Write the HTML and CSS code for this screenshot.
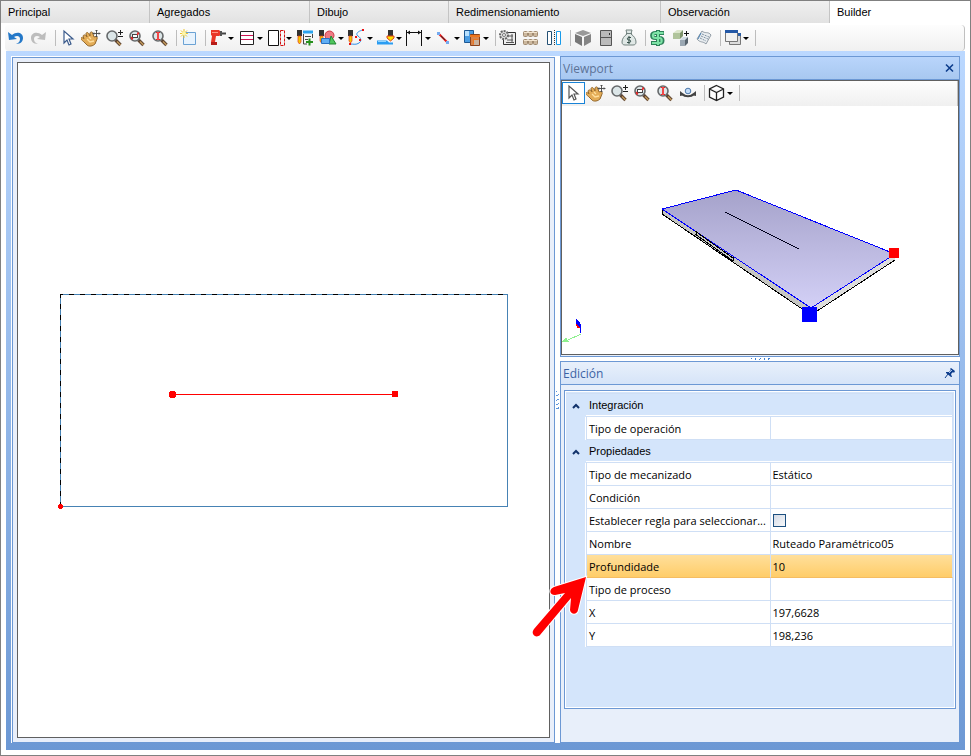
FILE: index.html
```html
<!DOCTYPE html>
<html lang="es">
<head>
    <meta charset="UTF-8">
    <meta name="viewport" content="width=device-width, initial-scale=1.0">
    <title>Builder</title>
    <link rel="stylesheet" href="styles.css">
</head>
<body>
    <!-- icons used by both toolbars -->
    <svg class="defs" width="0" height="0" aria-hidden="true">
        <symbol id="i-cursor" viewBox="0 0 20 20">
            <path d="M6 3v12l3-3 2 5 2-1-2-5h4z" fill="#fff" stroke="currentColor" stroke-width="1.2"/>
        </symbol>
        <symbol id="i-hand" viewBox="0 0 20 20">
            <path d="M2 8c1-2 3-1 4 1L5 6c0-2 2-2 3 0l1 2 0-3c1-2 3-1 3 1l1 3c2-1 4 0 3 2l-2 5c-2 2-6 3-8 1l-3-3c-2-2-4-3-3-4 1-1 2 0 3 1z" fill="#e3ac57" stroke="#94682c"/>
            <path d="M6 11l3 3 4-1M8 9l2 2" fill="none" stroke="#ffdf9f" stroke-width="1.300"/>
            <path d="M15.500 2v7M12 5.500h7M14.500 3l1-1 1 1M14.500 8l1 1 1-1M13 4.500l-1 1 1 1M18 4.500l1 1-1 1" fill="none" stroke="#444" stroke-width=".9"/>
        </symbol>
        <symbol id="i-lens" viewBox="0 0 20 20">
            <path d="M11.500 12l5 5" stroke="#5c4330" stroke-width="3.400"/>
            <path d="M13 13.500l3.500 3.500" stroke="#c49a5a" stroke-width="1.400"/>
            <circle cx="8" cy="8" r="5" fill="#dce6e8" stroke="#66696b" stroke-width="1.600"/>
        </symbol>
        <symbol id="i-zoom" viewBox="0 0 20 20">
            <use href="#i-lens"/>
            <path d="M14 4.500h5M16.500 2v5M14 8.500h5" stroke="#222"/>
        </symbol>
        <symbol id="i-zoomwin" viewBox="0 0 20 20">
            <use href="#i-lens"/>
            <rect x="5.500" y="6.500" width="5" height="3" fill="#fff" stroke="#444"/>
            <path d="M4 9l2 2M10 7l2-2M4 11h2M10 5h2" stroke="#e22" stroke-width="1.200"/>
        </symbol>
        <symbol id="i-zoomfit" viewBox="0 0 20 20">
            <use href="#i-lens"/>
            <path d="M6 4.500h4M6 11.500h4" stroke="#e22"/>
            <path d="M8 4v8" stroke="#f04848" stroke-width="2"/>
        </symbol>
    </svg>

    <div class="app">
        <nav class="tabs">
            <a class="tab" href="#">Principal</a>
            <a class="tab" href="#">Agregados</a>
            <a class="tab" href="#">Dibujo</a>
            <a class="tab" href="#">Redimensionamiento</a>
            <a class="tab" href="#">Observación</a>
            <a class="tab active" href="#" aria-current="page">Builder</a>
        </nav>

        <div class="toolbar main-toolbar">
            <button class="tool" aria-label="Deshacer">
                <svg viewBox="0 0 20 20"><path d="M2 4l1 8 8-1-3-2c3-2 6-1 6 2 0 2-1 4-4 5 5 0 7-3 7-6 0-5-6-7-11-3z" fill="#2478c8"/></svg>
            </button>
            <button class="tool" aria-label="Rehacer">
                <svg viewBox="0 0 20 20"><path d="M17 4l-1 8-8-1 3-2C8 7 5 8 5 11c0 2 1 4 4 5-5 0-7-3-7-6 0-5 6-7 11-3z" fill="#bdbdbd"/></svg>
            </button>
            <span class="sep"></span>
            <button class="tool cursor" aria-label="Seleccionar"><svg><use href="#i-cursor"/></svg></button>
            <button class="tool" aria-label="Mover vista"><svg><use href="#i-hand"/></svg></button>
            <button class="tool" aria-label="Zoom"><svg><use href="#i-zoom"/></svg></button>
            <button class="tool" aria-label="Zoom ventana"><svg><use href="#i-zoomwin"/></svg></button>
            <button class="tool" aria-label="Zoom extensión"><svg><use href="#i-zoomfit"/></svg></button>
            <span class="sep"></span>
            <button class="tool" aria-label="Nuevo">
                <svg viewBox="0 0 20 20"><path d="M4.500 4.500h12v12h-12z" fill="#e8f3fd" stroke="#6ba2d4"/><path d="M5 1v9M1 5.500h8M2 2.500l6 6M8 2.500l-6 6" stroke="#ecc52f"/><circle cx="5" cy="5.500" r="2" fill="#fff6a6"/></svg>
            </button>
            <span class="sep"></span>
            <button class="tool drop" aria-label="Taladro">
                <svg viewBox="0 0 20 20"><path d="M3 2h8l2 2v3l-2 1H8l-1 6h2v3H3v-3l1-6-1-1z" fill="#e93528"/><path d="M3 14h6v3H3z" fill="#b61c18"/><path d="M4 4.500h6" stroke="#ff9485"/><path d="M12 3h2v5h-2z" fill="#555"/><path d="M14 5.500h4" stroke="#444" stroke-width="2"/></svg>
            </button>
            <button class="tool drop" aria-label="Ranura">
                <svg viewBox="0 0 20 20"><path d="M3.500 3.500h13v13h-13z" fill="#fff" stroke="#222"/><path d="M4 7.500h12M4 11.500h12" stroke="#cf1353"/></svg>
            </button>
            <button class="tool drop" aria-label="Borde">
                <svg viewBox="0 0 20 20"><path d="M2.500 2.500h10v15h-10z" fill="#fff" stroke="#111"/><path d="M14.500 2.500h4v15h-4z" fill="none" stroke="#d31111" stroke-dasharray="3 1"/></svg>
            </button>
            <button class="tool" aria-label="Lista de herramientas">
                <svg viewBox="0 0 20 20"><path d="M2 2h5v6H2z" fill="#333"/><path d="M3 8h3v6l-1.500 2L3 14z" fill="#f5c800" stroke="#e13b1c" stroke-width=".7"/><path d="M8 2.500h10v3H8z" fill="#2da4ee"/><path d="M8.500 6v10H12M10 8.500h6M10 11.500h3M17.500 6v4" fill="none" stroke="#444"/><path d="M14.500 10.500v7M11 14h7" stroke="#26901c" stroke-width="2"/></svg>
            </button>
            <button class="tool drop" aria-label="Formas">
                <svg viewBox="0 0 20 20"><path d="M1 2h5v6H1z" fill="#333"/><path d="M2 8h3v5l-1.500 2L2 13z" fill="#f6c900" stroke="#e13b1c" stroke-width=".7"/><circle cx="11.500" cy="7.500" r="4.500" fill="#ee7a83" stroke="#cb3844"/><path d="M13 8l5 8h-7z" fill="#4fc65d" stroke="#218531"/><path d="M3.500 10.500h8v5h-8z" fill="#5faef4" stroke="#2870c1"/></svg>
            </button>
            <button class="tool drop" aria-label="Curva">
                <svg viewBox="0 0 20 20"><path d="M1 2h5v6H1z" fill="#333"/><path d="M2 8h3v5l-1.500 2L2 13z" fill="#f6c900" stroke="#e13b1c" stroke-width=".7"/><path d="M16 2c-5 1-8 4-5 6s4 5 1 7-5 1-9 1" fill="none" stroke="#2b8fe6"/><path d="M15 1h2v2h-2zM8 8h2v2H8zM12 11h2v2h-2zM2 15h2v2H2z" fill="#e11"/></svg>
            </button>
            <button class="tool drop" aria-label="Vaciado">
                <svg viewBox="0 0 20 20"><path d="M12 2h5v6h-5z" fill="#333"/><path d="M11 8h7v2l-3.500 3L11 10z" fill="#fbe000" stroke="#e13b1c"/><path d="M1 12.500h10l2 2h4v2H1z" fill="#2b9df2"/><path d="M2 13.500h8" stroke="#91d4ff"/></svg>
            </button>
            <button class="tool drop" aria-label="Cota">
                <svg viewBox="0 0 20 20"><path d="M1.500 2v16M16.500 2v16M2 4.500h14" stroke="#111"/><path d="M2 4.500l3-2v4zM16 4.500l-3-2v4z" fill="#111"/></svg>
            </button>
            <button class="tool drop" aria-label="Línea">
                <svg viewBox="0 0 20 20"><path d="M4 5l10 10" stroke="#e11a1a" stroke-width="2"/><path d="M7 8l4 4" stroke="#333"/><path d="M3 4h3v3H3zM12 13h3v3h-3z" fill="#74aaf0"/></svg>
            </button>
            <button class="tool drop" aria-label="Copiar">
                <svg viewBox="0 0 20 20"><path d="M1.500 2.500h9v12h-9z" fill="#4b9de3" stroke="#1d5893"/><path d="M2 3h4v5H2z" fill="#b8e1ff"/><path d="M7.500 6.500h9v11h-9z" fill="#d7834a" stroke="#8d431b"/><path d="M7 7h10v2H7zM10 11h5v5h-5z" fill="#ed761f"/><path d="M11 12h5v5h-5z" fill="#c9b3a0"/></svg>
            </button>
            <span class="sep"></span>
            <button class="tool" aria-label="Procesar">
                <svg viewBox="0 0 20 20"><path d="M6 4.500h11.500v12h-12V10" fill="#eee" stroke="#333"/><path d="M8 8h7M9 12h6M8 14.500h8M14 6v8" stroke="#555"/><circle cx="6" cy="7" r="4" fill="#ddd" stroke="#666" stroke-width="2" stroke-dasharray="2 1"/><circle cx="6" cy="7" r="1.500" fill="#fff" stroke="#777"/></svg>
            </button>
            <button class="tool" aria-label="Piezas">
                <svg viewBox="0 0 20 20"><g fill="#cbb79d" stroke="#a08a70"><rect x="2.500" y="3.500" width="4" height="5" rx="1"/><rect x="7.500" y="3.500" width="4" height="5" rx="1"/><rect x="12.500" y="3.500" width="4" height="5" rx="1"/><rect x="2.500" y="11.500" width="4" height="5" rx="1"/><rect x="7.500" y="11.500" width="4" height="5" rx="1"/><rect x="12.500" y="11.500" width="4" height="5" rx="1"/></g><path d="M3 4.500h13M3 12.500h13" stroke="#f3e5d0"/></svg>
            </button>
            <button class="tool" aria-label="Espejo">
                <svg viewBox="0 0 20 20"><path d="M3.500 3.500h4v13h-4z" fill="#fff" stroke="#245174"/><path d="M12.500 3.500h4v13h-4z" fill="#fff" stroke="#189bea"/><path d="M10.500 2v16" stroke="#333" stroke-dasharray="1 1"/></svg>
            </button>
            <span class="sep"></span>
            <button class="tool" aria-label="Módulo">
                <svg viewBox="0 0 20 20"><path d="M10 2l8 3-8 3-8-3z" fill="#999"/><path d="M2 6l7 3v9l-7-4z" fill="#777"/><path d="M18 6l-7 3v9l7-4z" fill="#858585"/></svg>
            </button>
            <button class="tool" aria-label="Puerta">
                <svg viewBox="0 0 20 20"><path d="M4.500 2.500h11v15h-11z" fill="#bbb" stroke="#555"/><path d="M5 9.500h10" stroke="#555"/><path d="M13 5h1v2h-1z" fill="#333"/></svg>
            </button>
            <button class="tool" aria-label="Presupuesto">
                <svg viewBox="0 0 20 20"><path d="M7 2h6l-1 4c3 2 5 5 5 8 0 2-1 3-3 3H6c-2 0-3-1-3-3 0-3 2-6 5-8z" fill="#e0e8e6" stroke="#72827f"/><path d="M7 5.500h6" stroke="#72827f"/><path d="M12 9.500H9.500c-1.500 0-1.500 2.500 0 2.500h1c1.500 0 1.500 2.500 0 2.500H8M10 8v8" fill="none" stroke="#344f49"/></svg>
            </button>
            <span class="sep"></span>
            <button class="tool" aria-label="Precio">
                <svg viewBox="0 0 20 20"><path d="M16 5H7.500C3 5 3 10 7.500 10h4c4 0 4 5 0 5H3M10 2v16" fill="none" stroke="#2e825a" stroke-width="4"/><path d="M15.500 5H7.500C4 5 4 10 7.500 10h4c3 0 3 5 0 5H4M10 3v14" fill="none" stroke="#7de3a6" stroke-width="2"/></svg>
            </button>
            <button class="tool" aria-label="Agregar módulo">
                <svg viewBox="0 0 20 20"><path d="M2 5l4-3h6l-3 3z" fill="#dbe6cb"/><path d="M2 5h7v6H2z" fill="#b0c49b"/><path d="M9 5l3-3v6l-3 3z" fill="#7e936a"/><path d="M15.500 3v5M13 5.500h5" stroke="#111"/><path d="M9 12l3-3h5l-3 3z" fill="#d0dae2"/><path d="M9 12h5v6H9z" fill="#9ba8b3"/><path d="M14 12l3-3v6l-3 3z" fill="#58646e"/></svg>
            </button>
            <button class="tool" aria-label="Informe">
                <svg viewBox="0 0 20 20"><path d="M3 11l5-8c3 3 6 0 9 4l-5 9c-3-3-6-1-9-5z" fill="#e9edf0" stroke="#929ca5"/><path d="M8 6l7 3M7 8l7 3M6 10l6 3" stroke="#8193a3" stroke-dasharray="2 1"/><path d="M7 5l-3 6" stroke="#4a82b4"/></svg>
            </button>
            <span class="sep"></span>
            <button class="tool drop" aria-label="Ventanas">
                <svg viewBox="0 0 20 20"><path d="M6.500 5.500h11v11h-11z" fill="#ddd" stroke="#777"/><path d="M14 5h4v3h-4z" fill="#2b5ea6"/><path d="M2.500 2.500h12v11h-12z" fill="#f1f1f1" stroke="#777"/><path d="M2 2h13v3H2z" fill="#2458a6"/></svg>
            </button>
            <span class="sep"></span>
        </div>

        <main class="workspace">
            <div class="panes">
                <section class="drawing-pane" aria-label="Dibujo de la pieza">
                    <svg class="drawing" viewBox="0 0 531 674" role="img" aria-label="Pieza con ruteado">
                        <path d="M42.500 231.500h447v212h-447z" fill="none" stroke="#4682b4"/>
                        <path d="M42.500 443.500v-212h447" fill="none" stroke="#000" stroke-dasharray="5 6"/>
                        <path d="M154 331.500h223" stroke="#f00"/>
                        <circle cx="154.500" cy="331.500" r="3.800" fill="#f00"/>
                        <rect x="374" y="328" width="6" height="6" fill="#f00"/>
                        <circle cx="42.500" cy="443.500" r="2.500" fill="#f00"/>
                    </svg>
                </section>

                <div class="splitter vertical"><span class="grip"></span></div>

                <div class="side">
                    <section class="panel viewport">
                        <header class="panel-head">
                            <h2>Viewport</h2>
                            <button class="head-btn" aria-label="Cerrar">
                                <svg viewBox="0 0 12 12"><path d="M2 2.500l7 7M9 2.500l-7 7" stroke="#0d3d8c" stroke-width="1.600"/></svg>
                            </button>
                        </header>
                        <div class="view">
                            <div class="toolbar">
                                <button class="tool selected" aria-label="Seleccionar"><svg><use href="#i-cursor"/></svg></button>
                                <button class="tool" aria-label="Mover vista"><svg><use href="#i-hand"/></svg></button>
                                <button class="tool" aria-label="Zoom"><svg><use href="#i-zoom"/></svg></button>
                                <button class="tool" aria-label="Zoom ventana"><svg><use href="#i-zoomwin"/></svg></button>
                                <button class="tool" aria-label="Zoom extensión"><svg><use href="#i-zoomfit"/></svg></button>
                                <button class="tool" aria-label="Rotar">
                                    <svg viewBox="0 0 20 20"><path d="M4 11c3 3 9 3 12 0" fill="none" stroke="#444" stroke-width="2"/><path d="M2 13V8l5 4zM18 13V8l-5 4z" fill="#444"/><circle cx="10" cy="8" r="2.800" fill="#c4ddf8" stroke="#4c78ab"/></svg>
                                </button>
                                <span class="sep"></span>
                                <button class="tool drop" aria-label="Vista">
                                    <svg viewBox="0 0 20 20"><path d="M9.500 2.500l7 3.500v8l-7 3.500-7-3.500V6zM2.500 6l7 3.500 7-3.500M9.500 9.500v8" fill="#fff" stroke="#222" stroke-width="1.300"/></svg>
                                </button>
                                <span class="sep"></span>
                            </div>
                            <svg class="scene" viewBox="0 0 396 248" role="img" aria-label="Vista 3D de la pieza">
                                <defs>
                                    <linearGradient id="top" x1="0" y1="0" x2="0" y2="1">
                                        <stop offset="0" stop-color="#a5a2ca"/>
                                        <stop offset="1" stop-color="#d3d0f6"/>
                                    </linearGradient>
                                </defs>
                                <path d="M100 103v5l149 101 84-55v-7l-84 55z" fill="#c6c6c2"/>
                                <path d="M249 202v7l84-55v-7z" fill="#dededc"/>
                                <path d="M100 103v5l149 101 84-55" fill="none" stroke="#000"/>
                                <path d="M100 103l74-19 159 64-84 54z" fill="url(#top)" stroke="#00f"/>
                                <path d="M133 125l38 27M133 128l38 27M134 125v3M171 151v4" stroke="#000"/>
                                <path d="M163 106l74 37" stroke="#00001c" stroke-width="1.300"/>
                                <rect x="327" y="142" width="10" height="10" fill="#f00"/>
                                <rect x="240" y="201" width="15" height="15" fill="#00f"/>
                                <path d="M19 228L4 235" stroke="#8ef08e"/>
                                <path d="M0 236l4-5 3 5z" fill="#8ef08e"/>
                                <path d="M14 218h5v4h-4z" fill="#f00"/>
                                <path d="M14 213l4 3v5l-4-3z" fill="#00f"/>
                                <path d="M18 218l1 9" stroke="#00f"/>
                            </svg>
                        </div>
                    </section>

                    <div class="splitter horizontal"><span class="grip"></span></div>

                    <section class="panel edition">
                        <header class="panel-head">
                            <h2>Edición</h2>
                            <button class="head-btn" aria-label="Fijar panel">
                                <svg viewBox="0 0 12 12"><path d="M7 1l4 3-1 2-1-1-2 2 1 3-1 0-5-4 0-1 3 0 2-2-1-1z" fill="#0d3d8c"/><path d="M4 7l-3 4" stroke="#0d3d8c"/><path d="M8 3L5 6" stroke="#a9c4ee"/></svg>
                            </button>
                        </header>
                        <div class="grid-box">
                            <table class="props">
                                <colgroup><col class="c-gutter"><col><col></colgroup>
                                <tbody>
                                    <tr class="category">
                                        <td class="gutter"><button class="toggle" aria-label="Contraer Integración"><svg viewBox="0 0 8 8"><path d="M1 6l3-3 3 3" fill="none" stroke="#12336b" stroke-width="2"/></svg></button></td>
                                        <th colspan="2">Integración</th>
                                    </tr>
                                    <tr>
                                        <td class="gutter"></td>
                                        <th><label for="operacion">Tipo de operación</label></th>
                                        <td><input type="text" id="operacion"></td>
                                    </tr>
                                    <tr class="category">
                                        <td class="gutter"><button class="toggle" aria-label="Contraer Propiedades"><svg viewBox="0 0 8 8"><path d="M1 6l3-3 3 3" fill="none" stroke="#12336b" stroke-width="2"/></svg></button></td>
                                        <th colspan="2">Propiedades</th>
                                    </tr>
                                    <tr>
                                        <td class="gutter"></td>
                                        <th><label for="mecanizado">Tipo de mecanizado</label></th>
                                        <td><input type="text" id="mecanizado" value="Estático"></td>
                                    </tr>
                                    <tr>
                                        <td class="gutter"></td>
                                        <th><label for="condicion">Condición</label></th>
                                        <td><input type="text" id="condicion"></td>
                                    </tr>
                                    <tr>
                                        <td class="gutter"></td>
                                        <th><label for="regla">Establecer regla para seleccionar...</label></th>
                                        <td><input type="checkbox" id="regla"></td>
                                    </tr>
                                    <tr>
                                        <td class="gutter"></td>
                                        <th><label for="nombre">Nombre</label></th>
                                        <td><input type="text" id="nombre" value="Ruteado Paramétrico05"></td>
                                    </tr>
                                    <tr class="current">
                                        <td class="gutter">
                                            <svg class="pointer" viewBox="0 0 60 64" aria-hidden="true">
                                                <path d="M57 2L49 35c-1 5-7 5-8 0l1-12L11 60c-4 4-10-1-6-6L36 18l-10 2c-6 0-6-6-1-8z" fill="#f00" stroke="#fff" stroke-width="2" paint-order="stroke"/>
                                            </svg>
                                        </td>
                                        <th><label for="profundidad">Profundidade</label></th>
                                        <td><input type="text" id="profundidad" value="10"></td>
                                    </tr>
                                    <tr>
                                        <td class="gutter"></td>
                                        <th><label for="proceso">Tipo de proceso</label></th>
                                        <td><input type="text" id="proceso"></td>
                                    </tr>
                                    <tr>
                                        <td class="gutter"></td>
                                        <th><label for="pos-x">X</label></th>
                                        <td><input type="text" id="pos-x" value="197,6628"></td>
                                    </tr>
                                    <tr>
                                        <td class="gutter"></td>
                                        <th><label for="pos-y">Y</label></th>
                                        <td><input type="text" id="pos-y" value="198,236"></td>
                                    </tr>
                                </tbody>
                            </table>
                        </div>
                    </section>
                </div>
            </div>
        </main>
    </div>
</body>
</html>
```
FILE: styles.css
```css
* {
    box-sizing: border-box;
}
body {
    margin: 0;
    font-family: "Open Sans", "Noto Sans", sans-serif;
    font-size: 11px;
    color: #000;
    background-color: #fff;
}
button {
    padding: 0;
    border: none;
    background: none;
}
.defs {
    position: absolute;
}
.app {
    display: flex;
    flex-direction: column;
    height: 100vh;
    border: 1px solid #808080;
}

/* tabs */
.tabs {
    display: grid;
    grid-template-columns: 149fr 160fr 139fr 212fr 169fr 140fr;
    height: 21px;
    border-bottom: 1px solid #dcdcdc;
    font-family: "Liberation Sans", Arial, sans-serif;
    font-size: 11px;
}
.tab {
    padding-left: 7px;
    border-right: 1px solid #c4c4c4;
    background: linear-gradient(#f0f0f0, #e2e2e2);
    color: #000;
    line-height: 22px;
    text-decoration: none;
}
.tab.active {
    border-right: none;
    background: #fff;
}

/* toolbars */
.toolbar {
    display: flex;
    align-items: center;
    flex: none;
    height: 25px;
    padding-bottom: 1px;
    background: linear-gradient(#fdfdfd, #f0f0f0);
    border-right: 1px solid #c0c0c0;
}
.main-toolbar {
    height: 26px;
    margin: 3px 5px 0 4px;
    padding-bottom: 0;
    border-radius: 4px;
}
.tool {
    display: flex;
    align-items: center;
    flex: none;
    width: 23px;
    height: 22px;
    padding-left: 1px;
    color: #555;
}
.tool svg {
    width: 20px;
    height: 20px;
}
.cursor {
    color: #3b5b8c;
}
.drop {
    width: 29px;
}
.drop::after {
    content: "";
    border: 3px solid transparent;
    border-top-color: #000;
    border-bottom: none;
}
.selected {
    padding-left: 0;
    border: 1px solid #1883d7;
    background-color: #fff;
}
.sep {
    flex: none;
    width: 1px;
    height: 16px;
    margin: 0 1px 0 4px;
    background-color: #bdbdbd;
}

/* workspace */
.workspace {
    flex: 1;
    display: flex;
    min-height: 0;
    margin: 0 5px 5px;
    padding: 5px 5px 7px;
    background: linear-gradient(#bbd8ff, #6c98d4);
}
.panes {
    flex: 1;
    display: grid;
    grid-template-columns: 544fr 5px 400fr;
    min-width: 0;
    background-color: #fff;
}
.drawing-pane {
    display: flex;
    min-height: 0;
    margin: 1px 0 0 1px;
    padding: 4px;
    border: 1px solid #6c98d4;
    background-color: #e9effa;
}
.drawing {
    flex: 1;
    min-width: 0;
    border: 1px solid #606060;
    background-color: #fff;
    shape-rendering: crispEdges;
}
.splitter {
    display: flex;
    align-items: center;
    justify-content: center;
}
.grip {
    width: 3px;
    height: 18px;
    background: repeating-linear-gradient(155deg, #5b93dc 0 1px, #fff 1px 4px);
}
.horizontal .grip {
    width: 19px;
    height: 2px;
    background: repeating-linear-gradient(115deg, #3f7fd0 0 1px, #fff 1px 4px);
}
.side {
    display: grid;
    grid-template-rows: 301fr 4px 382fr;
    min-width: 0;
    min-height: 0;
}

/* side panels */
.panel {
    display: flex;
    flex-direction: column;
    min-height: 0;
    border: 1px solid #6c98d4;
    background-color: #e8effa;
}
.panel-head {
    display: flex;
    align-items: center;
    justify-content: space-between;
    flex: none;
    height: 23px;
    padding: 0 3px 0 2px;
    border-bottom: 1px solid #6c98d4;
    color: #3c63a5;
    background: linear-gradient(#e8f0fb, #d6e4f8);
}
.viewport .panel-head {
    color: #5c7296;
    background: linear-gradient(#b9d5fb, #a8c8f0);
}
.panel-head h2 {
    margin: 0;
    font-size: 12px;
    font-weight: normal;
}
.head-btn, .head-btn svg {
    display: block;
    width: 12px;
    height: 12px;
}
.view {
    flex: 1;
    display: flex;
    flex-direction: column;
    min-height: 0;
    margin-bottom: 1px;
    border: 1px solid #606060;
    background-color: #fff;
}
.scene {
    flex: 1;
    min-height: 0;
    shape-rendering: crispEdges;
}

/* property grid */
.grid-box {
    flex: 1;
    margin: 5px 3px 33px;
    padding: 2px 2px 0 1px;
    border: 1px solid #6c98d4;
    background: #d4e5fb;
    box-shadow: inset 0 0 0 1px #fff;
}
.props {
    width: 100%;
    table-layout: fixed;
    border-collapse: separate;
    border-spacing: 0;
    border-top: 1px solid #cfdff5;
}
.c-gutter {
    width: 20px;
}
.props td, .props th {
    height: 23px;
    padding: 0 0 0 2px;
    border-bottom: 1px solid #cfdff5;
    border-left: 1px solid #cfdff5;
    background-color: #fff;
    font-weight: normal;
    text-align: left;
    white-space: nowrap;
}
.props td:last-child, .props .category th {
    border-right: 1px solid #cfdff5;
}
.props .gutter {
    position: relative;
    padding: 0 0 0 6px;
    border: none;
    border-right: 1px solid #fff;
    background-color: #d4e5fb;
}
.props .category .gutter {
    border-right: none;
}
.props .category th {
    border-left: none;
    padding-left: 3px;
    background-color: #d4e5fb;
    box-shadow: inset 0 -1px #fff;
    font-family: "Liberation Sans", Arial, sans-serif;
    font-size: 11px;
}
.props .current th, .props .current td:last-child {
    background: linear-gradient(#ffdf9b, #ffcd69);
    border-bottom-color: #f5bd62;
}
.toggle, .toggle svg {
    display: block;
    width: 8px;
    height: 8px;
}
.props input {
    display: block;
    margin: 0;
}
.props input[type="text"] {
    width: 100%;
    padding: 0;
    border: none;
    background: none;
    font: inherit;
}
.props input[type="checkbox"] {
    appearance: none;
    width: 13px;
    height: 13px;
    border: 1px solid #1d5080;
    background: linear-gradient(135deg, #d5dbe6, #f6f8fa);
}
.pointer {
    position: absolute;
    top: 20px;
    right: -4px;
    width: 60px;
    height: 64px;
    z-index: 1;
}
```
